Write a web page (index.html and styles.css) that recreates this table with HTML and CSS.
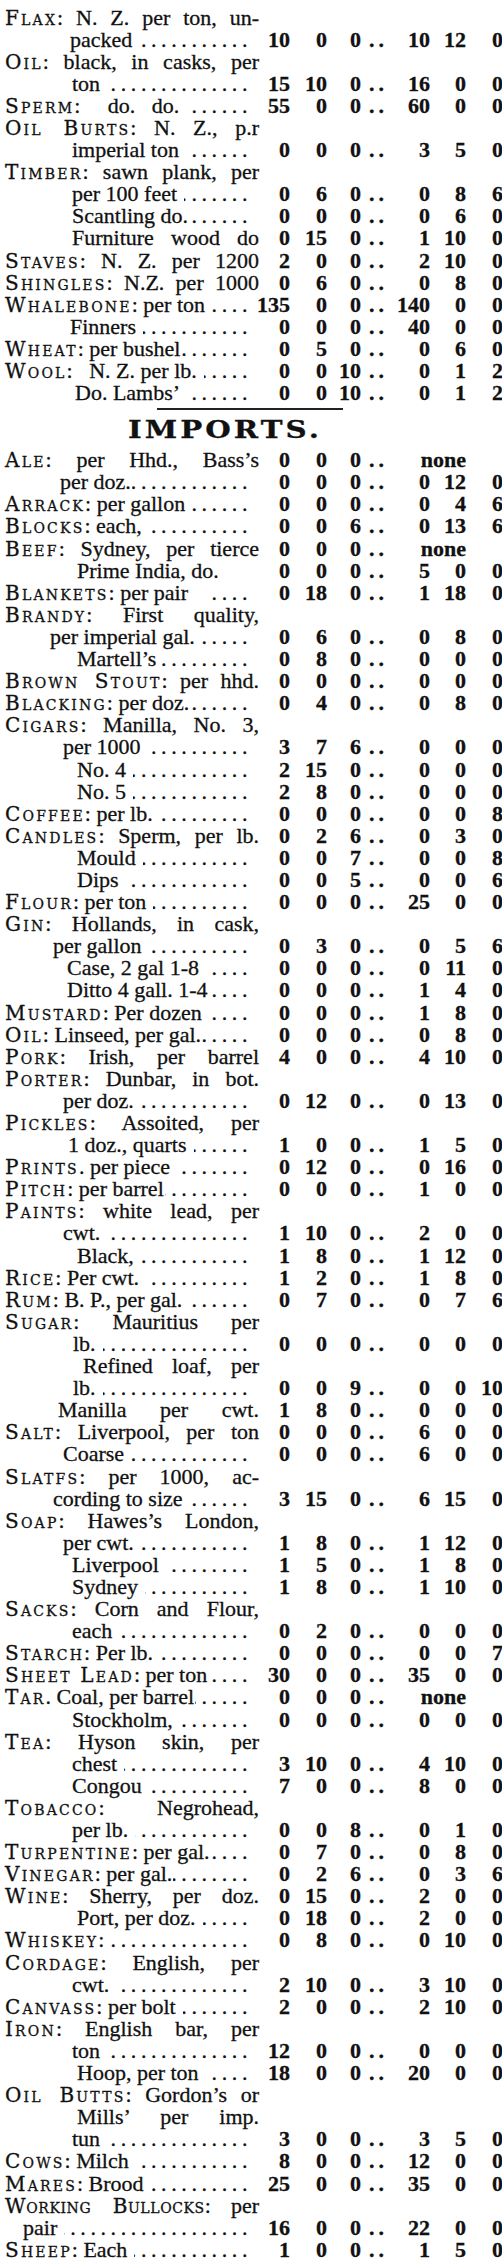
FILE: index.html
```html
<!DOCTYPE html>
<html lang="en">
<head>
<meta charset="utf-8">
<title>Prices Current</title>
<link rel="stylesheet" href="styles.css">
</head>
<body>
<div class="sheet">

<div class="row"><div class="lbl j"><span class="sc">Flax</span>: N. Z. per ton, un-</div></div>
<div class="row"><div class="lbl x70"><span>packed</span><i class="ldr"></i></div><b>10</b><b>0</b><b>0</b><span class="dd">..</span><b>10</b><b>12</b><b>0</b></div>
<div class="row"><div class="lbl j"><span class="sc">Oil</span>: black, in casks, per</div></div>
<div class="row"><div class="lbl x72"><span>ton</span><i class="ldr"></i></div><b>15</b><b>10</b><b>0</b><span class="dd">..</span><b>16</b><b>0</b><b>0</b></div>
<div class="row"><div class="lbl"><span><span class="sc">Sperm</span>:&emsp;&nbsp;do.&ensp; do.</span><i class="ldr"></i></div><b>55</b><b>0</b><b>0</b><span class="dd">..</span><b>60</b><b>0</b><b>0</b></div>
<div class="row"><div class="lbl j"><span class="sc">Oil Burts</span>: N. Z., p.r</div></div>
<div class="row"><div class="lbl x72"><span>imperial ton</span><i class="ldr"></i></div><b>0</b><b>0</b><b>0</b><span class="dd">..</span><b>3</b><b>5</b><b>0</b></div>
<div class="row"><div class="lbl j"><span class="sc">Timber</span>: sawn plank, per</div></div>
<div class="row"><div class="lbl x72"><span>per 100 feet</span><i class="ldr"></i></div><b>0</b><b>6</b><b>0</b><span class="dd">..</span><b>0</b><b>8</b><b>6</b></div>
<div class="row"><div class="lbl x72"><span>Scantling do.</span><i class="ldr tight"></i></div><b>0</b><b>0</b><b>0</b><span class="dd">..</span><b>0</b><b>6</b><b>0</b></div>
<div class="row"><div class="lbl j x72">Furniture wood do</div><b>0</b><b>15</b><b>0</b><span class="dd">..</span><b>1</b><b>10</b><b>0</b></div>
<div class="row"><div class="lbl j"><span class="sc">Staves</span>: N. Z. per 1200</div><b>2</b><b>0</b><b>0</b><span class="dd">..</span><b>2</b><b>10</b><b>0</b></div>
<div class="row"><div class="lbl j"><span class="sc">Shingles</span>: N.Z. per 1000</div><b>0</b><b>6</b><b>0</b><span class="dd">..</span><b>0</b><b>8</b><b>0</b></div>
<div class="row"><div class="lbl"><span><span class="sc">Whalebone</span>: per ton</span><i class="ldr"></i></div><b>135</b><b>0</b><b>0</b><span class="dd">..</span><b>140</b><b>0</b><b>0</b></div>
<div class="row"><div class="lbl x70"><span>Finners</span><i class="ldr"></i></div><b>0</b><b>0</b><b>0</b><span class="dd">..</span><b>40</b><b>0</b><b>0</b></div>
<div class="row"><div class="lbl"><span><span class="sc">Wheat</span>: per bushel</span><i class="ldr tight"></i></div><b>0</b><b>5</b><b>0</b><span class="dd">..</span><b>0</b><b>6</b><b>0</b></div>
<div class="row"><div class="lbl"><span><span class="sc">Wool</span>:&ensp; N. Z. per lb.</span><i class="ldr"></i></div><b>0</b><b>0</b><b>10</b><span class="dd">..</span><b>0</b><b>1</b><b>2</b></div>
<div class="row"><div class="lbl x75"><span>Do. Lambs’</span><i class="ldr"></i></div><b>0</b><b>0</b><b>10</b><span class="dd">..</span><b>0</b><b>1</b><b>2</b></div>

<div class="sep">
<hr class="rule">
<h2 class="head">IMPORTS.</h2>
</div>

<div class="row"><div class="lbl j"><span class="sc">Ale</span>: per Hhd., Bass’s</div><b>0</b><b>0</b><b>0</b><span class="dd">..</span><b class="none">none</b></div>
<div class="row"><div class="lbl x60"><span>per doz.</span><i class="ldr tight"></i></div><b>0</b><b>0</b><b>0</b><span class="dd">..</span><b>0</b><b>12</b><b>0</b></div>
<div class="row"><div class="lbl"><span><span class="sc">Arrack</span>: per gallon</span><i class="ldr"></i></div><b>0</b><b>0</b><b>0</b><span class="dd">..</span><b>0</b><b>4</b><b>6</b></div>
<div class="row"><div class="lbl"><span><span class="sc">Blocks</span>: each,</span><i class="ldr"></i></div><b>0</b><b>0</b><b>6</b><span class="dd">..</span><b>0</b><b>13</b><b>6</b></div>
<div class="row"><div class="lbl j"><span class="sc">Beef</span>: Sydney, per tierce</div><b>0</b><b>0</b><b>0</b><span class="dd">..</span><b class="none">none</b></div>
<div class="row"><div class="lbl x77"><span>Prime India, do.</span></div><b>0</b><b>0</b><b>0</b><span class="dd">..</span><b>5</b><b>0</b><b>0</b></div>
<div class="row"><div class="lbl"><span><span class="sc">Blankets</span>: per pair&ensp;</span><i class="ldr"></i></div><b>0</b><b>18</b><b>0</b><span class="dd">..</span><b>1</b><b>18</b><b>0</b></div>
<div class="row"><div class="lbl j"><span class="sc">Brandy</span>: First quality,</div></div>
<div class="row"><div class="lbl x50"><span>per imperial gal.</span><i class="ldr"></i></div><b>0</b><b>6</b><b>0</b><span class="dd">..</span><b>0</b><b>8</b><b>0</b></div>
<div class="row"><div class="lbl x77"><span>Martell’s</span><i class="ldr tight"></i></div><b>0</b><b>8</b><b>0</b><span class="dd">..</span><b>0</b><b>0</b><b>0</b></div>
<div class="row"><div class="lbl j"><span class="sc">Brown Stout</span>: per hhd.</div><b>0</b><b>0</b><b>0</b><span class="dd">..</span><b>0</b><b>0</b><b>0</b></div>
<div class="row"><div class="lbl"><span><span class="sc">Blacking</span>: per doz.</span><i class="ldr tight"></i></div><b>0</b><b>4</b><b>0</b><span class="dd">..</span><b>0</b><b>8</b><b>0</b></div>
<div class="row"><div class="lbl j"><span class="sc">Cigars</span>: Manilla, No. 3,</div></div>
<div class="row"><div class="lbl x63"><span>per 1000</span><i class="ldr"></i></div><b>3</b><b>7</b><b>6</b><span class="dd">..</span><b>0</b><b>0</b><b>0</b></div>
<div class="row"><div class="lbl x77"><span>No. 4</span><i class="ldr"></i></div><b>2</b><b>15</b><b>0</b><span class="dd">..</span><b>0</b><b>0</b><b>0</b></div>
<div class="row"><div class="lbl x77"><span>No. 5</span><i class="ldr"></i></div><b>2</b><b>8</b><b>0</b><span class="dd">..</span><b>0</b><b>0</b><b>0</b></div>
<div class="row"><div class="lbl"><span><span class="sc">Coffee</span>: per lb.</span><i class="ldr"></i></div><b>0</b><b>0</b><b>0</b><span class="dd">..</span><b>0</b><b>0</b><b>8</b></div>
<div class="row"><div class="lbl j"><span class="sc">Candles</span>: Sperm, per lb.</div><b>0</b><b>2</b><b>6</b><span class="dd">..</span><b>0</b><b>3</b><b>0</b></div>
<div class="row"><div class="lbl x77"><span>Mould</span><i class="ldr"></i></div><b>0</b><b>0</b><b>7</b><span class="dd">..</span><b>0</b><b>0</b><b>8</b></div>
<div class="row"><div class="lbl x77"><span>Dips</span><i class="ldr"></i></div><b>0</b><b>0</b><b>5</b><span class="dd">..</span><b>0</b><b>0</b><b>6</b></div>
<div class="row"><div class="lbl"><span><span class="sc">Flour</span>: per ton</span><i class="ldr"></i></div><b>0</b><b>0</b><b>0</b><span class="dd">..</span><b>25</b><b>0</b><b>0</b></div>
<div class="row"><div class="lbl j"><span class="sc">Gin</span>: Hollands, in cask,</div></div>
<div class="row"><div class="lbl x53"><span>per gallon</span><i class="ldr"></i></div><b>0</b><b>3</b><b>0</b><span class="dd">..</span><b>0</b><b>5</b><b>6</b></div>
<div class="row"><div class="lbl x67"><span>Case, 2 gal 1-8</span><i class="ldr"></i></div><b>0</b><b>0</b><b>0</b><span class="dd">..</span><b>0</b><b>11</b><b>0</b></div>
<div class="row"><div class="lbl x67"><span>Ditto 4 gall. 1-4</span><i class="ldr tight"></i></div><b>0</b><b>0</b><b>0</b><span class="dd">..</span><b>1</b><b>4</b><b>0</b></div>
<div class="row"><div class="lbl"><span><span class="sc">Mustard</span>: Per dozen</span><i class="ldr"></i></div><b>0</b><b>0</b><b>0</b><span class="dd">..</span><b>1</b><b>8</b><b>0</b></div>
<div class="row"><div class="lbl"><span><span class="sc">Oil</span>: Linseed, per gal.</span><i class="ldr tight"></i></div><b>0</b><b>0</b><b>0</b><span class="dd">..</span><b>0</b><b>8</b><b>0</b></div>
<div class="row"><div class="lbl j"><span class="sc">Pork</span>: Irish, per barrel</div><b>4</b><b>0</b><b>0</b><span class="dd">..</span><b>4</b><b>10</b><b>0</b></div>
<div class="row"><div class="lbl j"><span class="sc">Porter</span>: Dunbar, in bot.</div></div>
<div class="row"><div class="lbl x63"><span>per doz.</span><i class="ldr"></i></div><b>0</b><b>12</b><b>0</b><span class="dd">..</span><b>0</b><b>13</b><b>0</b></div>
<div class="row"><div class="lbl j"><span class="sc">Pickles</span>: Assoited, per</div></div>
<div class="row"><div class="lbl x68"><span>1 doz., quarts</span><i class="ldr"></i></div><b>1</b><b>0</b><b>0</b><span class="dd">..</span><b>1</b><b>5</b><b>0</b></div>
<div class="row"><div class="lbl"><span><span class="sc">Prints</span>. per piece</span><i class="ldr"></i></div><b>0</b><b>12</b><b>0</b><span class="dd">..</span><b>0</b><b>16</b><b>0</b></div>
<div class="row"><div class="lbl"><span><span class="sc">Pitch</span>: per barrel</span><i class="ldr tight"></i></div><b>0</b><b>0</b><b>0</b><span class="dd">..</span><b>1</b><b>0</b><b>0</b></div>
<div class="row"><div class="lbl j"><span class="sc">Paints</span>: white lead, per</div></div>
<div class="row"><div class="lbl x63"><span>cwt.</span><i class="ldr"></i></div><b>1</b><b>10</b><b>0</b><span class="dd">..</span><b>2</b><b>0</b><b>0</b></div>
<div class="row"><div class="lbl x77"><span>Black,</span><i class="ldr"></i></div><b>1</b><b>8</b><b>0</b><span class="dd">..</span><b>1</b><b>12</b><b>0</b></div>
<div class="row"><div class="lbl"><span><span class="sc">Rice</span>: Per cwt.</span><i class="ldr"></i></div><b>1</b><b>2</b><b>0</b><span class="dd">..</span><b>1</b><b>8</b><b>0</b></div>
<div class="row"><div class="lbl"><span><span class="sc">Rum</span>: B. P., per gal.</span><i class="ldr"></i></div><b>0</b><b>7</b><b>0</b><span class="dd">..</span><b>0</b><b>7</b><b>6</b></div>
<div class="row"><div class="lbl j"><span class="sc">Sugar</span>: Mauritius per</div></div>
<div class="row"><div class="lbl x73"><span>lb.</span><i class="ldr"></i></div><b>0</b><b>0</b><b>0</b><span class="dd">..</span><b>0</b><b>0</b><b>0</b></div>
<div class="row"><div class="lbl j x83">Refined loaf, per</div></div>
<div class="row"><div class="lbl x73"><span>lb.</span><i class="ldr"></i></div><b>0</b><b>0</b><b>9</b><span class="dd">..</span><b>0</b><b>0</b><b>10</b></div>
<div class="row"><div class="lbl j x58">Manilla per cwt.</div><b>1</b><b>8</b><b>0</b><span class="dd">..</span><b>0</b><b>0</b><b>0</b></div>
<div class="row"><div class="lbl j"><span class="sc">Salt</span>: Liverpool, per ton</div><b>0</b><b>0</b><b>0</b><span class="dd">..</span><b>6</b><b>0</b><b>0</b></div>
<div class="row"><div class="lbl x63"><span>Coarse</span><i class="ldr"></i></div><b>0</b><b>0</b><b>0</b><span class="dd">..</span><b>6</b><b>0</b><b>0</b></div>
<div class="row"><div class="lbl j"><span class="sc">Slatfs</span>: per 1000, ac-</div></div>
<div class="row"><div class="lbl x53"><span>cording to size</span><i class="ldr"></i></div><b>3</b><b>15</b><b>0</b><span class="dd">..</span><b>6</b><b>15</b><b>0</b></div>
<div class="row"><div class="lbl j"><span class="sc">Soap</span>: Hawes’s London,</div></div>
<div class="row"><div class="lbl x63"><span>per cwt.</span><i class="ldr"></i></div><b>1</b><b>8</b><b>0</b><span class="dd">..</span><b>1</b><b>12</b><b>0</b></div>
<div class="row"><div class="lbl x72"><span>Liverpool</span><i class="ldr"></i></div><b>1</b><b>5</b><b>0</b><span class="dd">..</span><b>1</b><b>8</b><b>0</b></div>
<div class="row"><div class="lbl x72"><span>Sydney</span><i class="ldr"></i></div><b>1</b><b>8</b><b>0</b><span class="dd">..</span><b>1</b><b>10</b><b>0</b></div>
<div class="row"><div class="lbl j"><span class="sc">Sacks</span>: Corn and Flour,</div></div>
<div class="row"><div class="lbl x72"><span>each</span><i class="ldr"></i></div><b>0</b><b>2</b><b>0</b><span class="dd">..</span><b>0</b><b>0</b><b>0</b></div>
<div class="row"><div class="lbl"><span><span class="sc">Starch</span>: Per lb.</span><i class="ldr"></i></div><b>0</b><b>0</b><b>0</b><span class="dd">..</span><b>0</b><b>0</b><b>7</b></div>
<div class="row"><div class="lbl"><span><span class="sc">Sheet Lead</span>: per ton</span><i class="ldr tight"></i></div><b>30</b><b>0</b><b>0</b><span class="dd">..</span><b>35</b><b>0</b><b>0</b></div>
<div class="row"><div class="lbl"><span><span class="sc">Tar</span>. Coal, per barrel</span><i class="ldr tight"></i></div><b>0</b><b>0</b><b>0</b><span class="dd">..</span><b class="none">none</b></div>
<div class="row"><div class="lbl x72"><span>Stockholm,</span><i class="ldr"></i></div><b>0</b><b>0</b><b>0</b><span class="dd">..</span><b>0</b><b>0</b><b>0</b></div>
<div class="row"><div class="lbl j"><span class="sc">Tea</span>: Hyson skin, per</div></div>
<div class="row"><div class="lbl x72"><span>chest</span><i class="ldr"></i></div><b>3</b><b>10</b><b>0</b><span class="dd">..</span><b>4</b><b>10</b><b>0</b></div>
<div class="row"><div class="lbl x72"><span>Congou</span><i class="ldr"></i></div><b>7</b><b>0</b><b>0</b><span class="dd">..</span><b>8</b><b>0</b><b>0</b></div>
<div class="row"><div class="lbl j"><span class="sc">Tobacco</span>: Negrohead,</div></div>
<div class="row"><div class="lbl x72"><span>per lb.</span><i class="ldr"></i></div><b>0</b><b>0</b><b>8</b><span class="dd">..</span><b>0</b><b>1</b><b>0</b></div>
<div class="row"><div class="lbl"><span><span class="sc">Turpentine</span>: per gal.</span><i class="ldr tight"></i></div><b>0</b><b>7</b><b>0</b><span class="dd">..</span><b>0</b><b>8</b><b>0</b></div>
<div class="row"><div class="lbl"><span><span class="sc">Vinegar</span>: per gal.</span><i class="ldr tight"></i></div><b>0</b><b>2</b><b>6</b><span class="dd">..</span><b>0</b><b>3</b><b>6</b></div>
<div class="row"><div class="lbl j"><span class="sc">Wine</span>: Sherry, per doz.</div><b>0</b><b>15</b><b>0</b><span class="dd">..</span><b>2</b><b>0</b><b>0</b></div>
<div class="row"><div class="lbl x77"><span>Port, per doz.</span><i class="ldr"></i></div><b>0</b><b>18</b><b>0</b><span class="dd">..</span><b>2</b><b>0</b><b>0</b></div>
<div class="row"><div class="lbl"><span><span class="sc">Whiskey</span>:</span><i class="ldr"></i></div><b>0</b><b>8</b><b>0</b><span class="dd">..</span><b>0</b><b>10</b><b>0</b></div>
<div class="row"><div class="lbl j"><span class="sc">Cordage</span>: English, per</div></div>
<div class="row"><div class="lbl x72"><span>cwt.</span><i class="ldr"></i></div><b>2</b><b>10</b><b>0</b><span class="dd">..</span><b>3</b><b>10</b><b>0</b></div>
<div class="row"><div class="lbl"><span><span class="sc">Canvass</span>: per bolt</span><i class="ldr"></i></div><b>2</b><b>0</b><b>0</b><span class="dd">..</span><b>2</b><b>10</b><b>0</b></div>
<div class="row"><div class="lbl j"><span class="sc">Iron</span>: English bar, per</div></div>
<div class="row"><div class="lbl x72"><span>ton</span><i class="ldr"></i></div><b>12</b><b>0</b><b>0</b><span class="dd">..</span><b>0</b><b>0</b><b>0</b></div>
<div class="row"><div class="lbl x77"><span>Hoop, per ton</span><i class="ldr"></i></div><b>18</b><b>0</b><b>0</b><span class="dd">..</span><b>20</b><b>0</b><b>0</b></div>
<div class="row"><div class="lbl j"><span class="sc">Oil Butts</span>: Gordon’s or</div></div>
<div class="row"><div class="lbl j x77">Mills’ per imp.</div></div>
<div class="row"><div class="lbl x72"><span>tun</span><i class="ldr"></i></div><b>3</b><b>0</b><b>0</b><span class="dd">..</span><b>3</b><b>5</b><b>0</b></div>
<div class="row"><div class="lbl"><span><span class="sc">Cows</span>: Milch</span><i class="ldr"></i></div><b>8</b><b>0</b><b>0</b><span class="dd">..</span><b>12</b><b>0</b><b>0</b></div>
<div class="row"><div class="lbl"><span><span class="sc">Mares</span>: Brood</span><i class="ldr"></i></div><b>25</b><b>0</b><b>0</b><span class="dd">..</span><b>35</b><b>0</b><b>0</b></div>
<div class="row"><div class="lbl j"><span class="sc narrow">Working Bullocks</span>: per</div></div>
<div class="row"><div class="lbl x23"><span>pair</span><i class="ldr"></i></div><b>16</b><b>0</b><b>0</b><span class="dd">..</span><b>22</b><b>0</b><b>0</b></div>
<div class="row"><div class="lbl"><span><span class="sc">Sheep</span>: Each</span><i class="ldr"></i></div><b>1</b><b>0</b><b>0</b><span class="dd">..</span><b>1</b><b>5</b><b>0</b></div>

</div>
</body>
</html>
```

FILE: styles.css
```css
html, body {
  margin: 0;
  padding: 0;
  background: #ffffff;
}

body {
  color: #111111;
  font-family: "Liberation Serif", "Times New Roman", serif;
  font-size: 22px;
  -webkit-text-stroke: 0.3px #111111;
}

.sheet {
  width: 498px;
  padding: 6.5px 0 0 5px;
}

.row {
  display: grid;
  grid-template-columns: 254px 32px 40px 32px 26px 42px 35px 37px;
  height: 22.1px;
  line-height: 22.1px;
  white-space: nowrap;
}

.lbl {
  display: flex;
  min-width: 0;
}

.lbl.j {
  display: block;
  text-align: justify;
  text-align-last: justify;
}

.ldr {
  flex: 1;
  min-width: 0;
  overflow: hidden;
  direction: rtl;
  margin: 0 7px 0 7px;
  letter-spacing: 4.6px;
  font-style: normal;
}

.ldr.tight {
  margin-left: 1px;
}

.ldr::after {
  content: "..............................................................";
}

.row b {
  display: flex;
  justify-content: flex-end;
  font-weight: 700;
}

.row > :nth-child(2) { padding-right: 1px; }
.row > :nth-child(3) { padding-right: 4px; }
.row > :nth-child(4) { padding-right: 2px; }
.row > :nth-child(6) { padding-right: 1px; }
.row > :nth-child(7) { padding-right: 0; }
.row > :nth-child(8) { padding-right: 0; }

.dd {
  text-align: left;
  letter-spacing: 4px;
  padding-left: 6px;
  font-weight: 700;
}

.row b.none {
  grid-column: 6 / 8;
  padding-right: 0;
}

.sc {
  font-family: "DejaVu Serif", "Liberation Serif", serif;
  font-size: 20px;
  font-variant: small-caps;
  letter-spacing: 2.2px;
}

.sc.narrow {
  letter-spacing: 0.6px;
}

.x23 { padding-left: 18px; }
.x50 { padding-left: 45px; }
.x53 { padding-left: 48px; }
.x58 { padding-left: 53px; }
.x60 { padding-left: 55px; }
.x63 { padding-left: 58px; }
.x67 { padding-left: 62px; }
.x68 { padding-left: 63px; }
.x70 { padding-left: 65px; }
.x72 { padding-left: 67px; }
.x73 { padding-left: 68px; }
.x75 { padding-left: 70px; }
.x77 { padding-left: 72px; }
.x83 { padding-left: 78px; }

.sep {
  height: 45px;
  display: flex;
  flex-direction: column;
  align-items: flex-start;
}

.rule {
  width: 186px;
  height: 2px;
  margin: 3.7px 0 0 152px;
  padding: 0;
  border: 0;
  background: #222222;
}

.head {
  margin: 8px 0 0 123px;
  font-family: "DejaVu Serif", "Liberation Serif", serif;
  font-weight: 700;
  font-size: 24px;
  line-height: 24px;
  letter-spacing: 2.5px;
  transform: scaleX(1.22);
  transform-origin: left center;
}
```
